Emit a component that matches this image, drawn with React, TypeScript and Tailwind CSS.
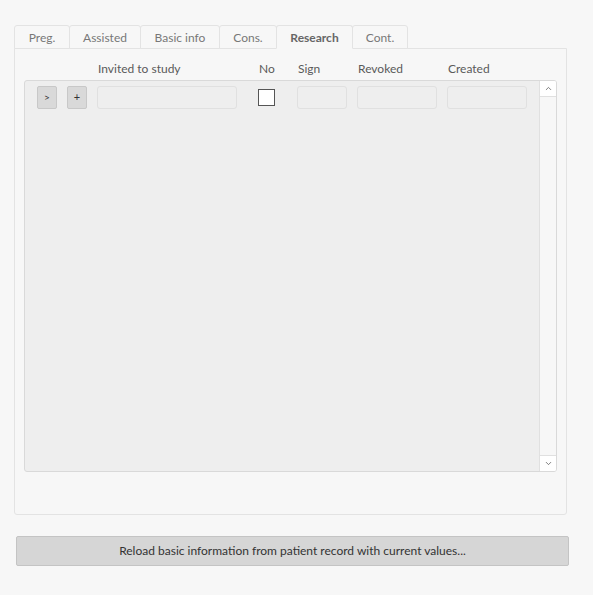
import { ChevronDown, ChevronUp } from "lucide-react";

const TABS: [string, string][] = [
  ["Preg.", "w-[56px]"],
  ["Assisted", "w-[72px]"],
  ["Basic info", "w-[80px]"],
  ["Cons.", "w-[58px]"],
  ["Research", "w-[77px]"],
  ["Cont.", "w-[56px]"],
];

function Field({ w }: { w: string }) {
  return <div className={`h-[23px] ${w} rounded-[3px] border border-[#e0e0e0] bg-[#eeeeee]`} />;
}

export default function App() {
  return (
    <div
      className="w-[593px] h-[595px] bg-[#f7f7f7] text-[12px] text-[#5a5a5a] pt-[25px]"
      style={{ fontFamily: 'Lato, "Open Sans", sans-serif' }}
    >
      {/* tabs */}
      <div className="flex pl-[14px] h-[24px]">
        {TABS.map(([t, w]) => {
          const active = t === "Research";
          return (
            <div
              key={t}
              className={`${w} flex items-center justify-center pt-[2px] border border-[#e3e3e3] -ml-px first:ml-0 rounded-t-[3px] bg-[#f7f7f7] ${
                active ? "border-b-[#f7f7f7] font-bold text-[#666666] z-10" : "text-[#777777]"
              }`}
            >
              {t}
            </div>
          );
        })}
      </div>

      {/* pane */}
      <div className="ml-[14px] w-[553px] h-[467px] -mt-px border border-[#e3e3e3] rounded-b-[3px] pt-[12px] px-[9px]">
        <div className="flex h-[16px] items-center leading-none">
          <span className="w-[74px]" />
          <span className="w-[161px]">Invited to study</span>
          <span className="w-[39px]">No</span>
          <span className="w-[60px]">Sign</span>
          <span className="w-[90px]">Revoked</span>
          <span>Created</span>
        </div>

        <div className="mt-[3px] h-[392px] border border-[#d9d9d9] rounded-[3px] bg-[#eeeeee] flex overflow-hidden">
          <div className="flex-1 flex items-start pt-[5px] pl-[12px]">
            <div className="h-[23px] w-[20px] rounded-[2px] border border-[#c8c8c8] bg-[#d9d9d9] flex items-center justify-center text-[10px] text-[#333]">
              &gt;
            </div>
            <div className="ml-[10px] h-[23px] w-[20px] rounded-[2px] border border-[#c8c8c8] bg-[#d9d9d9] flex items-center justify-center text-[11px] text-[#333]">
              +
            </div>
            <div className="ml-[10px]">
              <Field w="w-[140px]" />
            </div>
            <div className="ml-[21px] mt-[3px] w-[17px] h-[17px] border border-[#555] bg-white" />
            <div className="ml-[22px]">
              <Field w="w-[50px]" />
            </div>
            <div className="ml-[10px]">
              <Field w="w-[80px]" />
            </div>
            <div className="ml-[10px]">
              <Field w="w-[80px]" />
            </div>
          </div>
          <div className="w-[17px] border-l border-[#e0e0e0] bg-[#f7f7f7] flex flex-col justify-between">
            <div className="h-[16px] bg-white border-b border-[#e0e0e0] flex items-center justify-center">
              <ChevronUp size={9} strokeWidth={2} className="text-[#555]" />
            </div>
            <div className="h-[16px] bg-white border-t border-[#e0e0e0] flex items-center justify-center">
              <ChevronDown size={9} strokeWidth={2} className="text-[#555]" />
            </div>
          </div>
        </div>
      </div>

      <div className="ml-[16px] mt-[21px] w-[553px] h-[30px] border border-[#c4c4c4] rounded-[2px] bg-[#d6d6d6] flex items-center justify-center text-[#333]">
        Reload basic information from patient record with current values...
      </div>
    </div>
  );
}
